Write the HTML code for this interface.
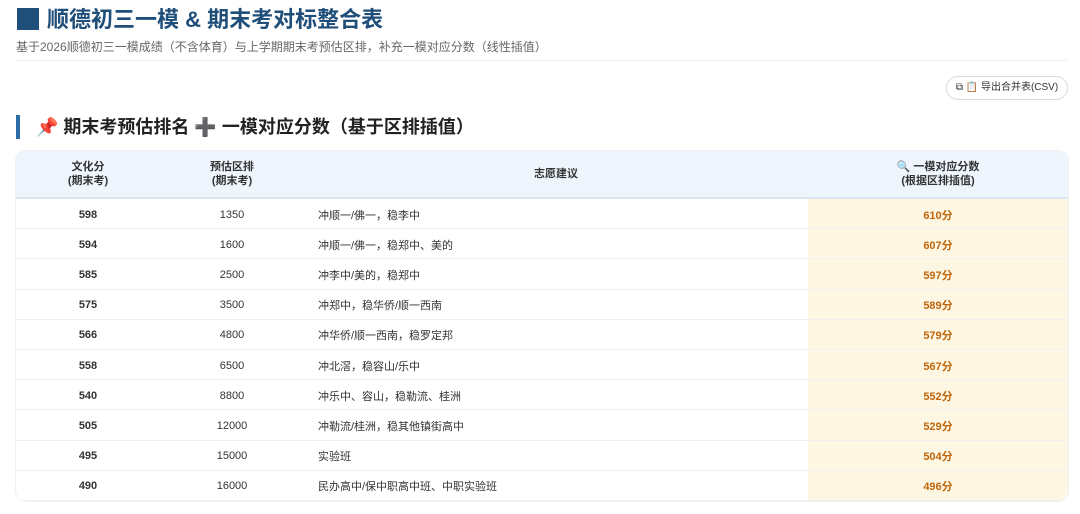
<!DOCTYPE html>
<html><head><meta charset="utf-8"><style>
*{margin:0;padding:0;box-sizing:border-box}
body{width:1080px;height:514px;background:#fff;font-family:"Liberation Sans","Noto Sans CJK SC",sans-serif;color:#222;position:relative;overflow:hidden}
.t{position:absolute;left:17px;top:5px;font-size:22px;font-weight:bold;color:#1f4e79;line-height:30px;white-space:nowrap}
.t .sq{display:inline-block;width:22px;height:22px;background:#1f4e79;vertical-align:-3px;margin-right:8px}
.sub{position:absolute;left:16px;top:38px;font-size:12px;color:#666;line-height:18px}
.hr{position:absolute;left:16px;right:12px;top:60px;height:1px;background:#eef0f3}
.btn{position:absolute;left:946px;top:76px;width:122px;height:24px;border:1px solid #d8dde3;border-radius:12px;font-size:10px;color:#333;line-height:22px;text-align:center}
.h2{position:absolute;left:16px;top:115px;height:24px;font-size:18px;font-weight:bold;color:#222;line-height:24px;padding-left:16px;border-left:4px solid #2d6ca8;white-space:nowrap}
table{position:absolute;left:16px;top:151px;width:1052px;border-collapse:separate;border-spacing:0;font-size:11px;border-radius:10px;overflow:hidden;box-shadow:0 0 0 1px #eef1f4}
th{background:#eef5fd;height:48px;font-weight:bold;font-size:11px;line-height:14px;border-bottom:2px solid #dbe6f0;color:#333}
td{height:30.2px;border-bottom:1px solid #eef0f2;text-align:center;color:#333;padding-top:2px}
td.b{font-weight:bold}
td.l{text-align:left;padding-left:14px}
td.o{background:#fdf6e2;color:#c0660c;font-weight:bold}
</style></head><body>
<div class="t"><span class="sq"></span>顺德初三一模 &amp; 期末考对标整合表</div>
<div class="sub">基于2026顺德初三一模成绩（不含体育）与上学期期末考预估区排，补充一模对应分数（线性插值）</div>
<div class="hr"></div>
<div class="btn">⧉ 📋 导出合并表(CSV)</div>
<div class="h2">📌 期末考预估排名 ➕ 一模对应分数（基于区排插值）</div>
<table>
<tr><th style="width:144px">文化分<br>(期末考)</th><th style="width:144px">预估区排<br>(期末考)</th><th style="width:504px">志愿建议</th><th>🔍 一模对应分数<br>(根据区排插值)</th></tr>
<tr><td class="b">598</td><td>1350</td><td class="l">冲顺一/佛一，稳李中</td><td class="o">610分</td></tr>
<tr><td class="b">594</td><td>1600</td><td class="l">冲顺一/佛一，稳郑中、美的</td><td class="o">607分</td></tr>
<tr><td class="b">585</td><td>2500</td><td class="l">冲李中/美的，稳郑中</td><td class="o">597分</td></tr>
<tr><td class="b">575</td><td>3500</td><td class="l">冲郑中，稳华侨/顺一西南</td><td class="o">589分</td></tr>
<tr><td class="b">566</td><td>4800</td><td class="l">冲华侨/顺一西南，稳罗定邦</td><td class="o">579分</td></tr>
<tr><td class="b">558</td><td>6500</td><td class="l">冲北滘，稳容山/乐中</td><td class="o">567分</td></tr>
<tr><td class="b">540</td><td>8800</td><td class="l">冲乐中、容山，稳勒流、桂洲</td><td class="o">552分</td></tr>
<tr><td class="b">505</td><td>12000</td><td class="l">冲勒流/桂洲，稳其他镇街高中</td><td class="o">529分</td></tr>
<tr><td class="b">495</td><td>15000</td><td class="l">实验班</td><td class="o">504分</td></tr>
<tr><td class="b">490</td><td>16000</td><td class="l">民办高中/保中职高中班、中职实验班</td><td class="o">496分</td></tr>
</table>
</body></html>
